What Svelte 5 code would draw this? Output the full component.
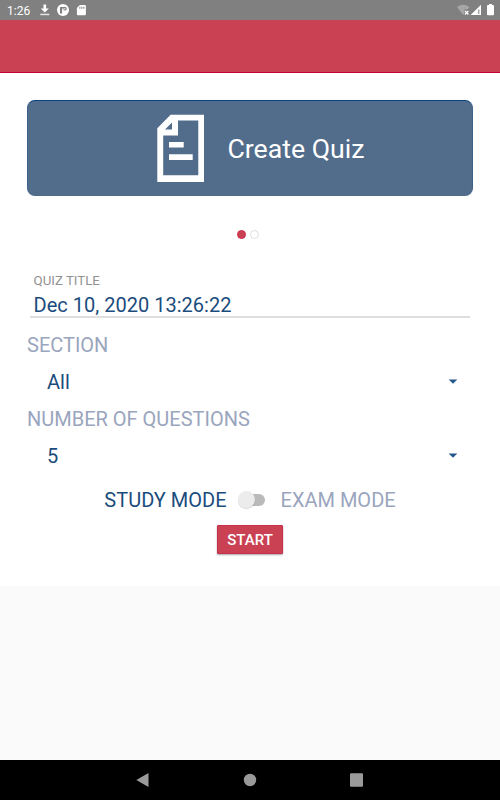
<script>
  let title = $state('Dec 10, 2020 13:26:22');
  let examMode = $state(false);
  let slide = $state(0);

  const fields = [
    { label: 'SECTION', value: 'All' },
    { label: 'NUMBER OF QUESTIONS', value: '5' }
  ];
</script>

<div class="screen">
  <div class="status-bar">
    <span class="clock">1:26</span>
    <svg class="left-icons" width="48" height="14" viewBox="0 0 48 14" fill="#fff">
      <path d="M3.5 1.4h2.6v4.2h2.7L4.8 9.5.8 5.6h2.7z" />
      <path d="M.3 10.7h9v1.5h-9z" opacity=".8" />
      <circle cx="23" cy="7" r="6" />
      <path d="M20 4h5.4q1.4 0 1.4 1.7T25.4 7.6h-1.8V5.4h-1.5v5.2H20z" fill="#808080" />
      <path d="M24.2 5.2h1.2v1.3h-1.2z" />
      <path d="M39.8 2h5.1q1 0 1 1v8.2q0 1-1 1h-7q-1 0-1-1V5z" />
      <path d="M39.4 3.7h1v2h-1zM41.4 3.7h1v2h-1zM43.4 3.7h1v2h-1z" fill="#808080" />
    </svg>
    <svg class="right-icons" width="38" height="14" viewBox="0 0 38 14" fill="#fff">
      <path d="M0 4Q6.2-.5 12.4 4L10.5 6.5H7.3V10.6L6.2 12z" opacity=".3" />
      <path d="M8 8l3.4 3.5M11.4 8L8 11.5" stroke="#fff" stroke-width="1.3" />
      <path d="M24 1.8V12H13.6z" />
      <path d="M20.9 6.4h1.6v4.5h-1.6z" fill="#808080" opacity=".7" />
      <path d="M32 1h3v1.1h1.1q.9 0 .9.9v8.3q0 .9-.9.9h-5.2q-.9 0-.9-.9V3q0-.9.9-.9H32z" />
    </svg>
  </div>
  <div class="app-bar"></div>

  <main>
    <div class="banner">
      <svg width="47" height="68" viewBox="0 0 47 68" fill="#fff">
        <path
          fill-rule="evenodd"
          d="M13.6 .7H47V68H.3V14.2zM21 6.5V21.6H6.2V61.3H41.3V6.5zM15 8.6L8 15.6h7z"
        />
        <path d="M12 28h14.7v5.6H12zM12 40.2h23.7V46H12z" />
      </svg>
      <span>Create Quiz</span>
    </div>

    <div class="dots">
      {#each [0, 1] as i}
        <button class="dot" class:active={i === slide} aria-label={`Slide ${i + 1}`} onclick={() => (slide = i)}></button>
      {/each}
    </div>

    <label class="title-field">
      <span>QUIZ TITLE</span>
      <input bind:value={title} spellcheck="false" />
    </label>

    {#each fields as field}
      <div class="label">{field.label}</div>
      <div class="spinner">
        <span>{field.value}</span>
        <svg width="10" height="5" viewBox="0 0 10 5"><path d="M.7.4h8.6L5 4.7z" fill="#23568a" /></svg>
      </div>
    {/each}

    <div class="mode">
      <span class:on={!examMode}>STUDY MODE</span>
      <button class="switch" class:checked={examMode} aria-label="Exam mode" onclick={() => (examMode = !examMode)}>
        <i></i>
      </button>
      <span class:on={examMode}>EXAM MODE</span>
    </div>

    <button class="start">START</button>
  </main>

  <nav>
    <svg width="14" height="16" viewBox="0 0 14 16"><path d="M.3 8L12.5 1v14z" /></svg>
    <svg width="14" height="16" viewBox="0 0 14 16"><circle cx="7" cy="8" r="6.2" /></svg>
    <svg width="14" height="16" viewBox="0 0 14 16"><rect y="1.2" width="13" height="13.6" rx="1" /></svg>
  </nav>
</div>

<style>
  .screen {
    width: 500px;
    height: 800px;
    display: flex;
    flex-direction: column;
    background: #fafafa;
    font-family: Roboto, sans-serif;
    color: #1b4c7c;
    overflow: hidden;
  }
  button {
    border: 0;
    padding: 0;
    font-family: inherit;
  }
  svg {
    display: block;
  }
  .status-bar {
    height: 20px;
    flex: none;
    box-sizing: border-box;
    padding: 0 5px 0 7px;
    display: flex;
    align-items: center;
    background: #808080;
  }
  .clock {
    width: 33px;
    padding-top: 1px;
    font-size: 12px;
    color: #fff;
  }
  .right-icons {
    margin-left: auto;
  }
  .app-bar {
    height: 53px;
    flex: none;
    box-sizing: border-box;
    background: #cb4154;
    border-bottom: 1px solid #c70039;
  }
  main {
    height: 513px;
    flex: none;
    box-sizing: border-box;
    padding: 27px 27px 0;
    display: flex;
    flex-direction: column;
    background: #fff;
  }
  .banner {
    height: 96px;
    flex: none;
    box-sizing: border-box;
    display: flex;
    align-items: center;
    justify-content: center;
    gap: 23px;
    background: #526d8b;
    border: 1px solid #3d6188;
    border-top-color: #0f427a;
    border-bottom-color: #526d8b;
    border-radius: 8px;
    color: #fff;
    font-size: 26.7px;
    padding-left: 22px;
  }
  .banner span {
    padding-top: 1px;
  }
  .banner svg {
    margin-top: -1px;
  }
  .dots {
    height: 9px;
    margin-top: 34px;
    display: flex;
    justify-content: center;
    gap: 4px;
    padding-right: 4px;
  }
  .dot {
    width: 9px;
    height: 9px;
    box-sizing: border-box;
    border: 1px solid #dedede;
    border-radius: 50%;
    background: #fff;
  }
  .dot.active {
    background: #cb4154;
    border-color: #cc2a48;
  }
  .title-field {
    margin: 33px 3px 0;
    height: 46px;
    flex: none;
    box-sizing: border-box;
    padding-left: 3.5px;
    border-bottom: 2px solid #dedede;
  }
  .title-field span {
    display: block;
    font-size: 13.3px;
    line-height: 18px;
    color: #929292;
  }
  .title-field input {
    display: block;
    width: 100%;
    height: 26px;
    border: 0;
    padding: 0;
    margin-top: 2px;
    outline: none;
    background: none;
    font-family: inherit;
    font-size: 20.05px;
    color: inherit;
  }
  .label {
    height: 24px;
    margin-top: 15px;
    font-size: 20px;
    line-height: 24px;
    color: #9aa5be;
  }
  .spinner {
    height: 24px;
    margin-top: 13px;
    padding: 0 15px 0 20px;
    display: flex;
    align-items: center;
    justify-content: space-between;
    font-size: 20px;
    margin-bottom: -2px;
  }
  .spinner svg {
    margin-top: -1px;
  }
  .mode {
    height: 24px;
    margin-top: 22px;
    display: flex;
    align-items: center;
    justify-content: center;
    font-size: 20px;
    color: #9aa5be;
  }
  .mode .on {
    color: #1b4c7c;
  }
  .switch {
    width: 27px;
    height: 12px;
    margin: -1px 16px 0 11px;
    display: flex;
    align-items: center;
    background: linear-gradient(#bababa, #bababa) 4px 0 / 23px 12px no-repeat;
    border-radius: 6px;
  }
  .switch i {
    width: 17px;
    height: 17px;
    flex: none;
    border-radius: 50%;
    background: #ececec;
    box-shadow: 0 1px 1px rgba(0, 0, 0, 0.15);
  }
  .switch.checked {
    justify-content: flex-end;
  }
  .start {
    width: 66px;
    height: 29px;
    flex: none;
    align-self: center;
    margin-top: 13px;
    background: #cb4154;
    border: 1px solid #c9304b;
    border-radius: 1px;
    box-shadow: 0 1px 2px rgba(0, 0, 0, 0.35);
    color: #fff;
    font-size: 15px;
    font-weight: 500;
  }
  nav {
    height: 40px;
    flex: none;
    margin-top: auto;
    display: flex;
    align-items: center;
    justify-content: center;
    gap: 93px;
    background: #000;
    fill: #9a9a9a;
  }
</style>
